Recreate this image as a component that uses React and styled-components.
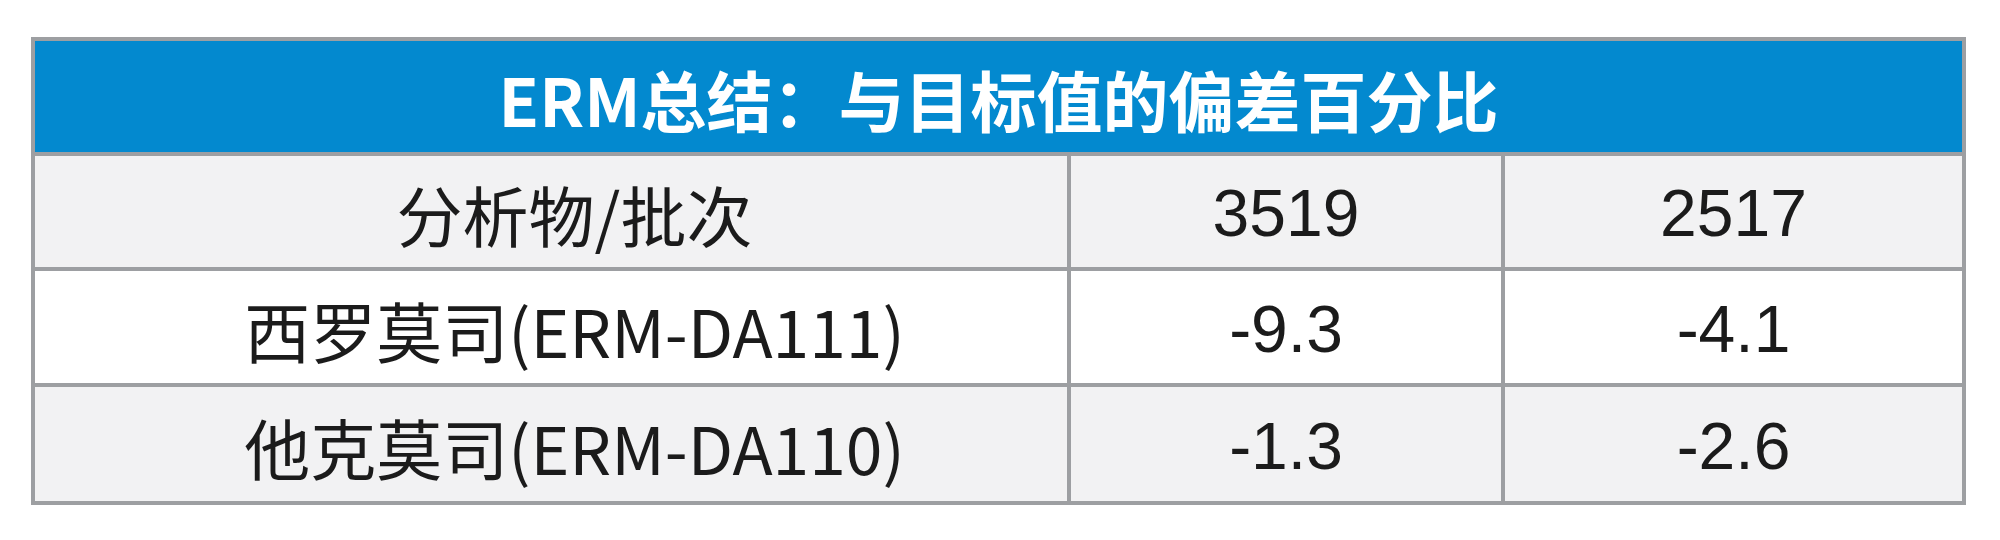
import React from 'react'
import styled, { createGlobalStyle } from 'styled-components'

const GlobalStyle = createGlobalStyle`
  body {
    margin: 0;
    background: #ffffff;
  }
`;

const Page = styled.div`
  padding: 37px 0 0 31px;
`;

/* grid with gray background and gaps acts as the cell borders */
const Table = styled.div`
  display: grid;
  grid-template-columns: 1032px 430px 457px;
  grid-template-rows: 111px 111px 112px 114px;
  gap: 4px;
  padding: 4px;
  width: 1935px;
  box-sizing: border-box;
  background: #9d9fa2;
`;

const Title = styled.div`
  grid-column: 1 / -1;
  background: #0389cf;
  color: #ffffff;
  display: flex;
  align-items: center;
  justify-content: center;
  font-family: "Noto Sans CJK SC", "Noto Sans", sans-serif;
  font-weight: 700;
  font-size: 66px;
  padding-top: 2px;
`;

const Cell = styled.div`
  background: ${({ shade }) => (shade ? '#f2f2f3' : '#ffffff')};
  color: #1b1b1b;
  display: flex;
  align-items: center;
  justify-content: center;
  font-size: 66px;
  font-family: ${({ num }) =>
    num ? '"Liberation Sans", Arial, sans-serif' : '"Noto Sans CJK SC", "Noto Sans", sans-serif'};
  padding-left: ${({ num }) => (num ? '0' : '47px')};
  padding-top: 3px;
  white-space: nowrap;
`;

const rows = [
  { name: '分析物/批次', a: '3519', b: '2517' },
  { name: '西罗莫司(ERM-DA111)', a: '-9.3', b: '-4.1' },
  { name: '他克莫司(ERM-DA110)', a: '-1.3', b: '-2.6' },
];

const App = () => {
  return (
    <>
      <GlobalStyle />
      <Page>
        <Table>
          <Title>ERM总结：与目标值的偏差百分比</Title>
          {rows.map((row, i) => {
            const shade = i !== 1
            return (
              <React.Fragment key={i}>
                <Cell shade={shade}>{row.name}</Cell>
                <Cell shade={shade} num>{row.a}</Cell>
                <Cell shade={shade} num>{row.b}</Cell>
              </React.Fragment>
            )
          })}
        </Table>
      </Page>
    </>
  )
}

export default App
